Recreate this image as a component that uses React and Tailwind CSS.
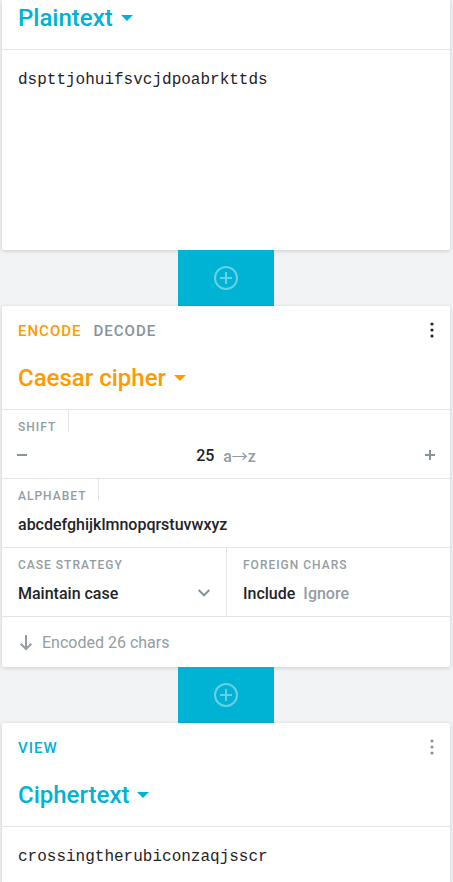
import React, { useState } from "react";

function Caret() {
  return (
    <svg width="12" height="6" viewBox="0 0 12 6" fill="currentColor" aria-hidden="true">
      <path d="M0 0h12L6 6z" />
    </svg>
  );
}

function Title({ children, className }) {
  return (
    <button type="button" className={`flex items-center gap-2 text-2xl font-medium leading-9 ${className}`}>
      {children}
      <Caret />
    </button>
  );
}

function MenuButton({ className }) {
  return (
    <button type="button" aria-label="Brick menu" className={`flex w-9 items-center justify-center ${className}`}>
      <svg width="4" height="16" viewBox="0 0 4 16" fill="currentColor" aria-hidden="true">
        <circle cx="2" cy="2" r="1.6" />
        <circle cx="2" cy="8" r="1.6" />
        <circle cx="2" cy="14" r="1.6" />
      </svg>
    </button>
  );
}

function AddButton() {
  return (
    <button
      type="button"
      aria-label="Add brick"
      className="flex h-14 w-24 shrink-0 items-center justify-center self-center bg-[#00b2d4] text-[#66d1e5]"
    >
      <svg width="24" height="24" viewBox="0 0 24 24" fill="none" stroke="currentColor" strokeWidth="2" aria-hidden="true">
        <circle cx="12" cy="12" r="11" />
        <path d="M12 6v12M6 12h12" />
      </svg>
    </button>
  );
}

const cardClass = "bg-white shadow-[0_1px_4px_rgba(0,0,0,0.16)]";
const tabClass = "text-[15px] font-medium tracking-[1px] uppercase";
const labelClass = "block h-[22px] pt-[10px] text-xs leading-[14px] font-medium tracking-[1px] uppercase text-[#939da2]";
const textClass =
  "block w-full resize-none bg-transparent px-4 py-4 text-base leading-7 text-[#1f2427] outline-none font-['Liberation_Mono',monospace]";

export default function App() {
  const [plain, setPlain] = useState("dspttjohuifsvcjdpoabrkttds");
  const [cipher, setCipher] = useState("crossingtherubiconzaqjsscr");
  const [shift, setShift] = useState(25);
  const [alphabet, setAlphabet] = useState("abcdefghijklmnopqrstuvwxyz");

  return (
    <main className="flex h-screen flex-col overflow-hidden bg-[#f2f3f5] pr-[3px] pl-[2px] font-[Roboto,sans-serif] text-[#1f2427]">
      <section className={`shrink-0 rounded-b-xs ${cardClass}`}>
        <header className="border-b border-[#e1e5e9] px-4 pb-[13px]">
          <Title className="text-[#00b2d4]">Plaintext</Title>
        </header>
        <textarea
          aria-label="Plaintext"
          spellCheck={false}
          value={plain}
          onChange={(e) => setPlain(e.target.value)}
          className={`h-[200px] ${textClass}`}
        />
      </section>

      <AddButton />

      <section className={`shrink-0 rounded-xs ${cardClass}`}>
        <header className="border-b border-[#e1e5e9] pb-[13px]">
          <div className="flex h-12 justify-between pl-4">
            <div className="flex items-center gap-3 pt-0.5">
              <button type="button" className={`text-[#ff9a00] ${tabClass}`}>Encode</button>
              <button type="button" className={`text-[#87939a] ${tabClass}`}>Decode</button>
            </div>
            <MenuButton />
          </div>
          <div className="px-4 pt-[6px]">
            <Title className="text-[#ff9a00]">Caesar cipher</Title>
          </div>
        </header>

        <div className="border-b border-[#e1e5e9]">
          <label htmlFor="shift" className={`w-fit border-r border-[#e1e5e9] pr-3 pl-4 ${labelClass}`}>Shift</label>
          <div className="flex h-[46px] items-center justify-between">
            <button
              type="button"
              aria-label="Decrease shift"
              onClick={() => setShift(shift - 1)}
              className="flex h-full w-10 items-center justify-center text-[#87939a]"
            >
              <svg width="10" height="10" viewBox="0 0 10 10" stroke="currentColor" strokeWidth="2" aria-hidden="true">
                <path d="M0 5h10" />
              </svg>
            </button>
            <div className="flex items-center gap-2 pt-0.5 font-medium leading-6">
              <input
                id="shift"
                value={shift}
                onChange={(e) => setShift(Number(e.target.value) || 0)}
                className="w-[19px] bg-transparent p-0 outline-none"
              />
              <span className="text-[#939da2]">
                a<span className="font-['Noto_Sans_CJK_JP',sans-serif] font-normal">→</span>z
              </span>
            </div>
            <button
              type="button"
              aria-label="Increase shift"
              onClick={() => setShift(shift + 1)}
              className="flex h-full w-10 items-center justify-center text-[#87939a]"
            >
              <svg width="10" height="10" viewBox="0 0 10 10" stroke="currentColor" strokeWidth="2" aria-hidden="true">
                <path d="M0 5h10M5 0v10" />
              </svg>
            </button>
          </div>
        </div>

        <div className="border-b border-[#e1e5e9]">
          <label htmlFor="alphabet" className={`w-fit border-r border-[#e1e5e9] pr-3 pl-4 ${labelClass}`}>Alphabet</label>
          <input
            id="alphabet"
            value={alphabet}
            spellCheck={false}
            onChange={(e) => setAlphabet(e.target.value)}
            className="block h-[46px] w-full bg-transparent px-4 font-medium outline-none"
          />
        </div>

        <div className="grid grid-cols-2 border-b border-[#e1e5e9]">
          <div>
            <label htmlFor="case" className={`px-4 ${labelClass}`}>Case strategy</label>
            <div className="grid items-center">
              <select
                id="case"
                className="col-start-1 row-start-1 h-[46px] w-full appearance-none bg-transparent px-4 pt-0.5 font-medium outline-none"
              >
                <option>Maintain case</option>
                <option>Ignore case</option>
                <option>Strict (A ≠ a)</option>
              </select>
              <svg
                className="pointer-events-none col-start-1 row-start-1 mr-4 justify-self-end text-[#87939a]"
                width="12"
                height="8"
                viewBox="0 0 12 8"
                fill="none"
                stroke="currentColor"
                strokeWidth="2"
                aria-hidden="true"
              >
                <path d="M.7 1L6 6.3 11.3 1" />
              </svg>
            </div>
          </div>
          <div role="group" aria-labelledby="foreign" className="border-l border-[#e1e5e9] px-4">
            <span id="foreign" className={labelClass}>Foreign chars</span>
            <div className="flex h-[46px] items-center gap-2 pt-0.5 font-medium">
              <button type="button" aria-pressed="true">Include</button>
              <button type="button" aria-pressed="false" className="text-[#939da2]">Ignore</button>
            </div>
          </div>
        </div>

        <footer className="flex h-[50px] items-center gap-2 px-4 pt-0.5 text-[#939da2]">
          <svg width="16" height="16" viewBox="0 0 16 16" fill="none" stroke="currentColor" strokeWidth="2" aria-hidden="true">
            <path d="M8 0v14M2.700 8.700L8 14l5.300-5.300" />
          </svg>
          <span>Encoded 26 chars</span>
        </footer>
      </section>

      <AddButton />

      <section className={`min-h-40 flex-1 rounded-t-xs ${cardClass}`}>
        <header className="border-b border-[#e1e5e9] pb-[13px]">
          <div className="flex h-12 justify-between pl-4">
            <div className="flex items-center pt-0.5">
              <button type="button" className={`text-[#00b2d4] ${tabClass}`}>View</button>
            </div>
            <MenuButton className="text-[#87939a]" />
          </div>
          <div className="px-4 pt-[6px]">
            <Title className="text-[#00b2d4]">Ciphertext</Title>
          </div>
        </header>
        <textarea
          aria-label="Ciphertext"
          spellCheck={false}
          rows={1}
          value={cipher}
          onChange={(e) => setCipher(e.target.value)}
          className={textClass}
        />
      </section>
    </main>
  );
}
